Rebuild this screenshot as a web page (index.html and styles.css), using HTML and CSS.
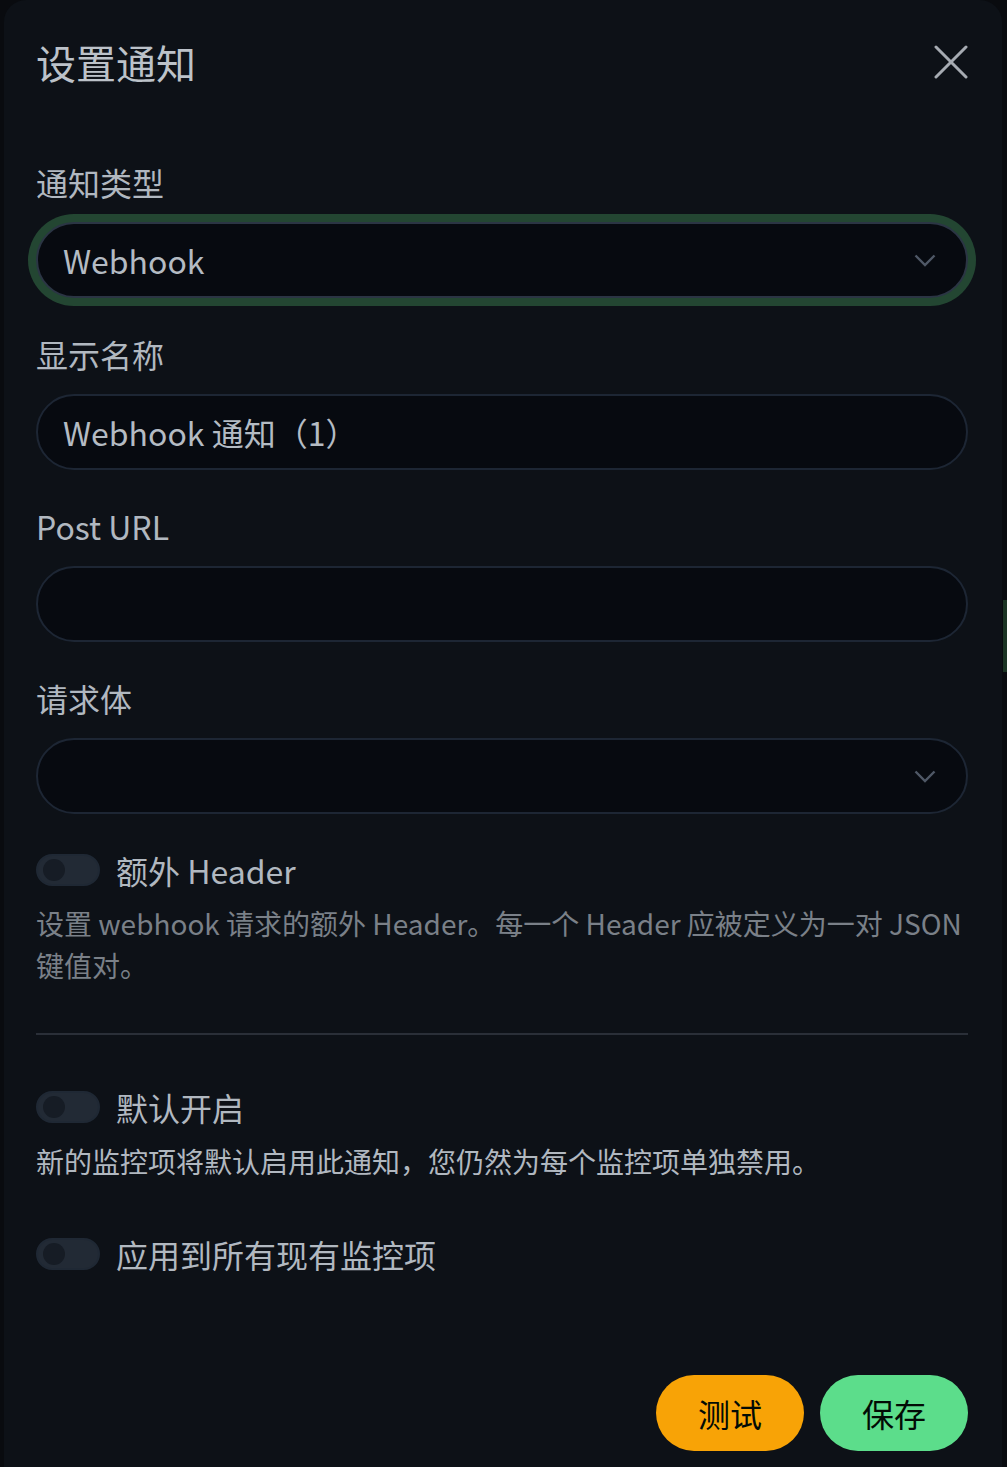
FILE: index.html
```html
<!DOCTYPE html>
<html lang="zh-CN">
<head>
<meta charset="utf-8">
<title>设置通知</title>
<link rel="stylesheet" href="styles.css">
</head>
<body>
<div class="backdrop-bar"></div>
<div class="modal">
  <div class="modal-header">
    <h5 class="modal-title">设置通知</h5>
    <button class="btn-close" aria-label="Close">
      <svg width="34" height="34" viewBox="0 0 34 34"><path d="M2 2L32 32M32 2L2 32" stroke="#a6abb2" stroke-width="3" fill="none" stroke-linecap="round"/></svg>
    </button>
  </div>
  <div class="modal-body">
    <div class="field">
      <label class="form-label">通知类型</label>
      <div class="control select focused">
        <span class="value">Webhook</span>
        <svg class="chev" width="22" height="13" viewBox="0 0 22 13"><path d="M1.5 1.5L11 11 20.5 1.5" stroke="#4f5866" stroke-width="2.4" fill="none"/></svg>
      </div>
    </div>
    <div class="field">
      <label class="form-label">显示名称</label>
      <div class="control"><span class="value">Webhook 通知（1）</span></div>
    </div>
    <div class="field">
      <label class="form-label">Post URL</label>
      <div class="control"><span class="value"></span></div>
    </div>
    <div class="field">
      <label class="form-label">请求体</label>
      <div class="control select">
        <span class="value"></span>
        <svg class="chev" width="22" height="13" viewBox="0 0 22 13"><path d="M1.5 1.5L11 11 20.5 1.5" stroke="#4f5866" stroke-width="2.4" fill="none"/></svg>
      </div>
    </div>
    <div class="switch-row">
      <span class="switch"><span class="knob"></span></span>
      <span class="switch-label">额外 Header</span>
    </div>
    <div class="form-text">设置 webhook 请求的额外 Header。每一个 Header 应被定义为一对 JSON 键值对。</div>
    <hr class="divider">
    <div class="switch-row">
      <span class="switch"><span class="knob"></span></span>
      <span class="switch-label">默认开启</span>
    </div>
    <div class="note">新的监控项将默认启用此通知，您仍然为每个监控项单独禁用。</div>
    <div class="switch-row last">
      <span class="switch"><span class="knob"></span></span>
      <span class="switch-label">应用到所有现有监控项</span>
    </div>
  </div>
  <div class="modal-footer">
    <button class="btn btn-warning">测试</button>
    <button class="btn btn-primary">保存</button>
  </div>
</div>
</body>
</html>
```

FILE: styles.css
```css
* { box-sizing: border-box; }
html, body { margin: 0; padding: 0; }
body {
  background: #090b0f;
  font-family: "Noto Sans CJK SC", "Noto Sans", sans-serif;
  color: #b1b8c0;
  height: 1467px;
  overflow: hidden;
  position: relative;
}
.backdrop-bar {
  position: absolute;
  right: 0;
  top: 600px;
  width: 4px;
  height: 72px;
  background: #1b3424;
}
.modal {
  margin-left: 4px;
  width: 998px;
  min-height: 1500px;
  background: #0d1117;
  border-radius: 22px;
}
.modal-header {
  display: flex;
  justify-content: space-between;
  align-items: center;
  padding: 38px 34px 0 32px;
}
.modal-title {
  margin: 0;
  font-size: 40px;
  line-height: 48px;
  font-weight: 400;
  color: #bcc2c9;
}
.btn-close {
  background: none;
  border: 0;
  padding: 0;
  width: 34px;
  height: 34px;
  display: flex;
}
.modal-body {
  padding: 72px 34px 0 32px;
}
.field { margin-bottom: 32px; }
.form-label {
  display: block;
  font-size: 32px;
  line-height: 48px;
  margin-bottom: 16px;
  color: #b1b8c0;
}
.control {
  height: 76px;
  background: #070a10;
  border: 2px solid #1d2634;
  border-radius: 38px;
  display: flex;
  align-items: center;
  justify-content: space-between;
  padding: 0 30px 0 25px;
}
.control.focused {
  border-color: #2b3544;
  box-shadow: 0 0 0 8px #234632;
}
.value {
  font-size: 32px;
  line-height: 48px;
  color: #b4bbc3;
}
.chev { flex: none; }
.switch-row {
  display: flex;
  align-items: center;
  gap: 16px;
  height: 48px;
}
.switch {
  width: 64px;
  height: 32px;
  border-radius: 16px;
  background: #222a35;
  border: 2px solid #1f2834;
  display: flex;
  align-items: center;
  padding-left: 5px;
}
.knob {
  width: 22px;
  height: 22px;
  border-radius: 50%;
  background: #161c25;
}
.switch-label {
  font-size: 32px;
  line-height: 48px;
  color: #b1b8c0;
}
.form-text {
  margin-top: 8px;
  font-size: 28px;
  line-height: 42px;
  color: #7a8088;
}
.divider {
  margin: 47px 0 48px;
  border: 0;
  height: 2px;
  background: #2a2f38;
}
.note {
  margin-top: 9px;
  margin-bottom: 48px;
  font-size: 28px;
  line-height: 42px;
  color: #b1b8c0;
}
.modal-footer {
  display: flex;
  justify-content: flex-end;
  gap: 16px;
  padding: 97px 34px 0 32px;
}
.btn {
  width: 148px;
  height: 76px;
  border: 0;
  border-radius: 38px;
  font-family: inherit;
  font-size: 32px;
  color: #020b05;
  display: flex;
  align-items: center;
  justify-content: center;
}
.btn-warning { background: #f8a306; }
.btn-primary { background: #5cdd8b; }
```
